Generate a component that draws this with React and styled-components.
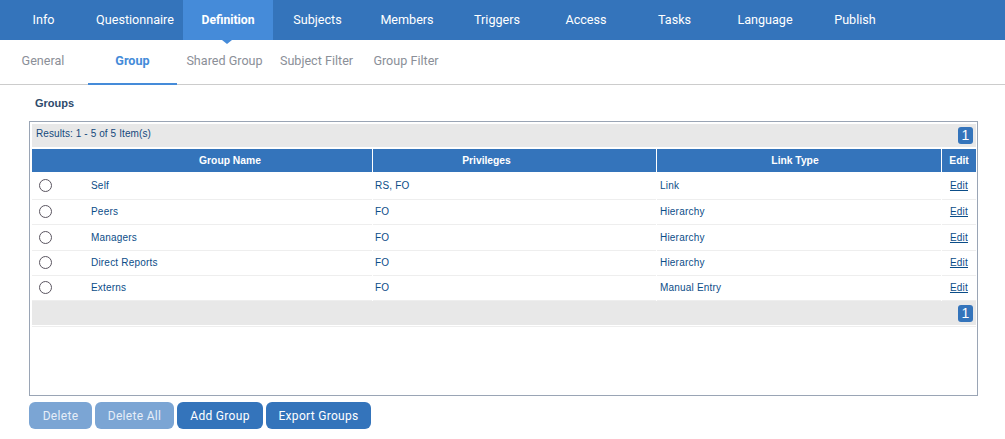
import React from "react";
import styled, { createGlobalStyle } from "styled-components";

const Global = createGlobalStyle`
  html, body { margin: 0; padding: 0; background: #fff; }
  body { font-family: "Liberation Sans", Arial, sans-serif; }
`;
const Page = styled.div`width: 1005px; height: 439px; overflow: hidden; background: #fff;`;
const TopNav = styled.nav`display: flex; height: 40px; background: #3474bb;`;
const TopItem = styled.div`
  width: ${p => p.$w}px; display: flex; align-items: center; justify-content: center; position: relative;
  box-sizing: border-box; padding-bottom: 1px;
  font: ${p => (p.$active ? 700 : 400)} ${p => (p.$active ? 12.2 : 12.6)}px Roboto, sans-serif; color: #fff;
  background: ${p => (p.$active ? "#458bd9" : "transparent")};
  ${p => p.$active && `&::after { content: ""; position: absolute; left: 39px; top: 40px; border: 5px solid transparent; border-top: 4px solid #458bd9; border-bottom: 0; }`}
`;
const SubNav = styled.div`display: flex; height: 44px; border-bottom: 1px solid #ccc;`;
const SubItem = styled.div`
  width: ${p => p.$w}px; flex: none; height: 45px; box-sizing: border-box; display: flex; align-items: center; justify-content: center;
  padding: 0 ${p => p.$r || 0}px 2px 0; font: ${p => (p.$active ? 700 : 400)} 12.6px Roboto, sans-serif;
  color: ${p => (p.$active ? "#458bd9" : "#8b8f98")};
  border-bottom: 2px solid ${p => (p.$active ? "#458bd9" : "transparent")};
  margin-bottom: -1px;
`;
const Content = styled.main`padding: 12px 0 0 29px;`;
const Title = styled.h2`margin: 0 0 11px 6px; font: 700 11px/13px "Liberation Sans", sans-serif; color: #2d4a6b;`;
const Panel = styled.section`
  width: 949px; height: 275px; box-sizing: border-box; border: 1px solid #9aa5b5; padding: 2px 1px 0 2px;
`;
const Bar = styled.div`
  display: flex; align-items: center; justify-content: space-between; height: ${p => p.$h}px; background: #e8e8e8;
  padding: 0 3px 0 4px; font: 10px "Liberation Sans", sans-serif; letter-spacing: 0.1px; color: #14487c;
`;
const ResultCount = styled.span`margin-bottom: 4px;`;
const Page1 = styled.span`
  width: 15px; height: 17px; border-radius: 3px; background: #3474bb; color: #fff;
  font: 400 14px/17px "Liberation Sans", sans-serif; text-align: center;
`;
const Row = styled.div`
  display: grid; grid-template-columns: 341px 284px 285px 1fr;
  height: ${p => p.$h}px; font: 10px "Liberation Sans", sans-serif; letter-spacing: 0.2px;
`;
const HeadRow = styled(Row)`margin-top: 2px;`;
const Head = styled.div`
  background: #3474bb; color: #fff; font: 700 10.3px "Liberation Sans", sans-serif; letter-spacing: 0;
  display: flex; align-items: center; justify-content: center; margin-right: 1px; box-sizing: border-box;
  padding-left: ${p => p.$l || 0}px; padding-right: ${p => p.$r || 0}px;
  &:last-child { margin-right: 0; }
`;
const Cell = styled.div`
  display: flex; align-items: center; box-sizing: border-box; color: #0b4d88; padding-left: ${p => p.$l || 2}px;
  border-bottom: 1px solid #eeeeee; margin-right: 1px; padding-bottom: 1px;
  &:last-child { margin-right: 0; justify-content: center; padding-left: 0; }
`;
const NameCell = styled(Cell)`padding-left: 7px;`;
const Radio = styled.span`
  width: 13px; height: 13px; box-sizing: border-box; border: 1.5px solid #5a5560; border-radius: 50%; margin-right: 39px; flex: none; background: #fff;
`;
const EditLink = styled.a`color: #0b4d88; text-decoration: underline;`;
const BottomRule = styled.div`height: 1px; background: #eee; margin-top: 1px;`;
const Buttons = styled.div`display: flex; gap: 3px; margin-top: 6px;`;
const Button = styled.button`
  width: ${p => p.$w}px; height: 27px; border: 0; border-radius: 6px; padding: 0;
  background: ${p => (p.$off ? "#7ba5d4" : "#3474bb")}; color: ${p => (p.$off ? "#e6eef8" : "#fff")};
  font: 12px Roboto, sans-serif; letter-spacing: 0.3px;
`;

const tabs = [["Info", 87], ["Questionnaire", 96], ["Definition", 90, true], ["Subjects", 89], ["Members", 90], ["Triggers", 90], ["Access", 88], ["Tasks", 89], ["Language", 92], ["Publish", 88]];
const subs = [["General", 88, false, 2], ["Group", 89, true], ["Shared Group", 95], ["Subject Filter", 89], ["Group Filter", 90]];
const rows = [
  ["Self", "RS, FO", "Link", 28],
  ["Peers", "FO", "Hierarchy", 25],
  ["Managers", "FO", "Hierarchy", 26],
  ["Direct Reports", "FO", "Hierarchy", 25],
  ["Externs", "FO", "Manual Entry", 25],
];

export default function App() {
  return (
    <Page>
      <Global />
      <TopNav>
        {tabs.map(([t, w, a]) => <TopItem key={t} $w={w} $active={a}>{t}</TopItem>)}
      </TopNav>
      <SubNav>
        {subs.map(([t, w, a, r]) => <SubItem key={t} $w={w} $active={a} $r={r}>{t}</SubItem>)}
      </SubNav>
      <Content>
        <Title>Groups</Title>
        <Panel>
          <Bar $h={23}><ResultCount>Results: 1 - 5 of 5 Item(s)</ResultCount><Page1>1</Page1></Bar>
          <HeadRow $h={23}>
            <Head $l={56}>Group Name</Head><Head $r={56}>Privileges</Head><Head $r={8}>Link Type</Head><Head>Edit</Head>
          </HeadRow>
          {rows.map(([n, p, l, h]) => (
            <Row key={n} $h={h}>
              <NameCell><Radio />{n}</NameCell>
              <Cell>{p}</Cell>
              <Cell $l={3}>{l}</Cell>
              <Cell><EditLink>Edit</EditLink></Cell>
            </Row>
          ))}
          <Bar $h={24}><span /><Page1>1</Page1></Bar>
          <BottomRule />
        </Panel>
        <Buttons>
          <Button $off $w={63}>Delete</Button>
          <Button $off $w={79}>Delete All</Button>
          <Button $w={86}>Add Group</Button>
          <Button $w={105}>Export Groups</Button>
        </Buttons>
      </Content>
    </Page>
  );
}
